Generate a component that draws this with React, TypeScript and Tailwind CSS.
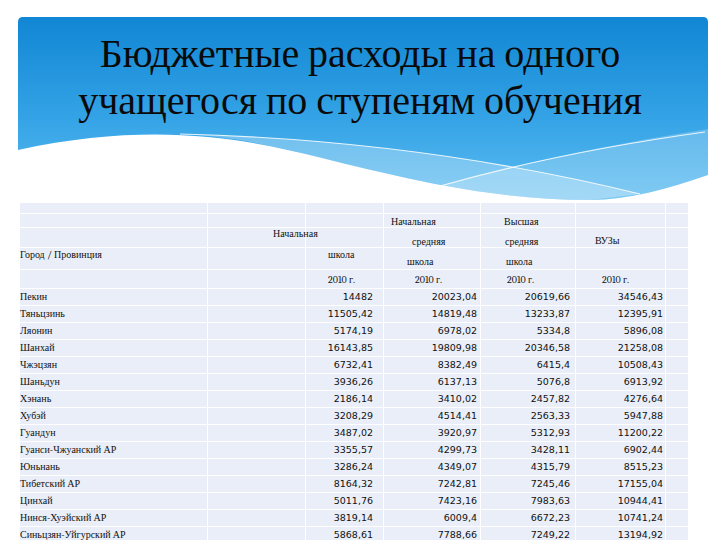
import type { ReactNode } from "react";

const rows: [string, string, string, string, string][] = [
  ["Пекин", "14482", "20023,04", "20619,66", "34546,43"],
  ["Тяньцзинь", "11505,42", "14819,48", "13233,87", "12395,91"],
  ["Ляонин", "5174,19", "6978,02", "5334,8", "5896,08"],
  ["Шанхай", "16143,85", "19809,98", "20346,58", "21258,08"],
  ["Чжэцзян", "6732,41", "8382,49", "6415,4", "10508,43"],
  ["Шаньдун", "3936,26", "6137,13", "5076,8", "6913,92"],
  ["Хэнань", "2186,14", "3410,02", "2457,82", "4276,64"],
  ["Хубэй", "3208,29", "4514,41", "2563,33", "5947,88"],
  ["Гуандун", "3487,02", "3920,97", "5312,93", "11200,22"],
  ["Гуанси-Чжуанский АР", "3355,57", "4299,73", "3428,11", "6902,44"],
  ["Юньнань", "3286,24", "4349,07", "4315,79", "8515,23"],
  ["Тибетский АР", "8164,32", "7242,81", "7245,46", "17155,04"],
  ["Цинхай", "5011,76", "7423,16", "7983,63", "10944,41"],
  ["Нинся-Хуэйский АР", "3819,14", "6009,4", "6672,23", "10741,24"],
  ["Синьцзян-Уйгурский АР", "5868,61", "7788,66", "7249,22", "13194,92"],
];

function C({ className = "", children }: { className?: string; children?: ReactNode }) {
  return (
    <div className={"bg-[#e9eef8] " + className}>
      {children ? <span className="relative whitespace-nowrap">{children}</span> : null}
    </div>
  );
}

function Banner() {
  return (
    <svg className="absolute inset-0" width="690" height="186" viewBox="0 0 690 186">
      <defs>
        <linearGradient id="sky" x1="0" y1="0" x2="0" y2="1">
          <stop offset="0" stopColor="#1186d4" />
          <stop offset="0.55" stopColor="#34a3e6" />
          <stop offset="1" stopColor="#5cbcf0" />
        </linearGradient>
      </defs>
      <path
        d="M0,5 Q0,0 5,0 H685 Q690,0 690,5 V158 C650,172 610,183 572,183 C480,183 400,165 300,140 C220,120 130,105 0,133 Z"
        fill="url(#sky)"
      />
      <path
        d="M162,117 Q402,123 622,177 L572,183 C480,183 400,165 300,140 C240,125 200,118 162,117 Z"
        fill="#ffffff"
        opacity="0.28"
      />
      <path
        d="M422,169 Q542,135 690,112 V158 C650,172 610,183 572,183 C520,183 470,178 422,169 Z"
        fill="#ffffff"
        opacity="0.22"
      />
      <path d="M162,117 Q402,123 622,177" fill="none" stroke="#ffffff" strokeWidth="1.2" opacity="0.85" />
      <path d="M422,169 Q542,135 687,115" fill="none" stroke="#ffffff" strokeWidth="1.2" opacity="0.85" />
    </svg>
  );
}

const num = "flex items-center justify-end font-['DejaVu_Sans'] text-[9.5px]";

export default function App() {
  return (
    <div className="w-[720px] h-[540px] bg-white overflow-hidden font-serif text-[#111]">
      <div className="pt-[17px] px-[18px]">
        <header className="relative h-[186px]">
          <Banner />
          <h1 className="relative pt-[14px] text-center text-[40px] leading-[47px] text-[#0a0a0a]">
            Бюджетные расходы на одного
            <br />
            учащегося по ступеням обучения
          </h1>
        </header>
      </div>

      <div className="pl-[20px] text-[10px] leading-[12px]">
        <div className="grid grid-cols-[187px_97px_77px_96px_94px_89px_22px] grid-rows-[10px_13px_19px_21px_18px] gap-px bg-white">
          <C /><C /><C /><C /><C /><C /><C />

          <C /><C /><C />
          <C className="pt-[2px] pl-[7px]">Начальная</C>
          <C className="pt-[2px] pl-[23px]">Высшая</C>
          <C /><C />

          <C />
          <C className="pl-[65px]">Начальная</C>
          <C />
          <C className="pt-[8px] pl-[28px]">средняя</C>
          <C className="pt-[8px] pl-[24px]">средняя</C>
          <C className="pt-[7px] pl-[19px]">ВУЗы</C>
          <C />

          <C className="pt-[1px]">Город / Провинция</C>
          <C />
          <C className="pt-[1px] pl-[22px]">школа</C>
          <C className="pt-[8px] pl-[23px]">школа</C>
          <C className="pt-[8px] pl-[25px]">школа</C>
          <C /><C />

          <C />
          <C />
          <C className="pt-[4px] pl-[22px]">2010 г.</C>
          <C className="pt-[4px] pl-[31px]">2010 г.</C>
          <C className="pt-[4px] pl-[26px]">2010 г.</C>
          <C className="pt-[4px] pl-[26px]">2010 г.</C>
          <C />
        </div>

        <div className="grid grid-cols-[187px_97px_77px_96px_94px_89px_22px] auto-rows-[16px] gap-px bg-white pt-px">
          {rows.map((r) => (
            <div key={r[0]} className="contents">
              <C className="flex items-center">{r[0]}</C>
              <C />
              <C className={num + " pr-[10px]"}>{r[1]}</C>
              <C className={num + " pr-[3px]"}>{r[2]}</C>
              <C className={num + " pr-[5px]"}>{r[3]}</C>
              <C className={num + " pr-[2px]"}>{r[4]}</C>
              <C />
            </div>
          ))}
        </div>
      </div>
    </div>
  );
}
